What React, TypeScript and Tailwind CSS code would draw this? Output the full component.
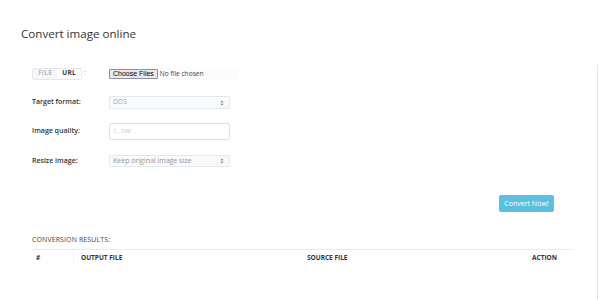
export default function App() {
  return (
    <div className="flex w-[600px] h-[299px] bg-white overflow-hidden font-['Open_Sans',sans-serif] text-[#333]">
      <main className="w-[597px] shrink-0">
        <h1 className="pl-[21px] pt-[26px] text-[11.6px] leading-[16px] font-normal text-[#333]">
          Convert image online
        </h1>

        <form className="pl-[32px] pt-[25px]">
          {/* source row */}
          <div className="flex items-center h-[13px]">
            <div className="w-[77px] flex items-center">
              <div className="flex h-[12px] border border-[#e3e8ee] rounded-[2px] text-[6.5px] font-bold leading-none">
                <span className="flex items-center px-[5px] bg-[#f4f6f9] text-[#b4bcc6] tracking-[0.3px]">FILE</span>
                <span className="flex items-center px-[5px] bg-white text-[#3a3a3a] tracking-[0.3px]">URL</span>
              </div>
              <span className="ml-[2px] text-[7px] text-[#999]">:</span>
            </div>
            <div className="flex items-center w-[129px] h-[13px] bg-[#fcfcfc]">
              <button
                type="button"
                className="h-[10px] px-[3px] bg-[#e9e9ed] border border-[#8f8f9d] rounded-[1px] text-[7px] leading-none text-black font-['Liberation_Sans',sans-serif]"
              >
                Choose Files
              </button>
              <span className="ml-[2px] text-[6.6px] text-[#444]">No file chosen</span>
            </div>
          </div>

          {/* target format */}
          <div className="flex items-center mt-[16px] h-[13px]">
            <label className="w-[77px] text-[7px] font-semibold text-[#333]">Target format:</label>
            <div className="flex items-center justify-between w-[121px] h-[13px] pl-[3px] pr-[5px] border border-[#e4e8ee] rounded-[2px] bg-[#f9fafc] text-[7px] text-[#a4acb6]">
              <span>DDS</span>
              <Arrows />
            </div>
          </div>

          {/* quality */}
          <div className="flex items-center mt-[14px] h-[17px]">
            <label className="w-[77px] text-[7px] font-semibold text-[#333]">Image quality:</label>
            <div className="flex items-center w-[121px] h-[17px] px-[3px] border border-[#dde2e8] rounded-[2px] bg-white text-[6px] italic text-[#b7bec7]">
              1...100
            </div>
          </div>

          {/* resize */}
          <div className="flex items-center mt-[15px] h-[12px]">
            <label className="w-[77px] text-[7px] font-semibold text-[#333]">Resize image:</label>
            <div className="flex items-center justify-between w-[121px] h-[12px] pl-[3px] pr-[5px] border border-[#e4e8ee] rounded-[2px] bg-[#f9fafc] text-[7px] text-[#8e969f]">
              <span>Keep original image size</span>
              <Arrows />
            </div>
          </div>

          <div className="flex justify-end pr-[43px] mt-[28px]">
            <button
              type="button"
              className="w-[55px] h-[17px] rounded-[2px] bg-[#5bc0de] text-white text-[7px] leading-none"
            >
              Convert Now!
            </button>
          </div>
        </form>

        <section className="pl-[32px] pr-[24px] mt-[23px]">
          <div className="text-[7px] text-[#444] leading-[10px] tracking-[0.1px]">CONVERSION RESULTS:</div>
          <div className="mt-[4px] border-t border-[#e8eaed] flex h-[16px] items-center text-[6.5px] font-bold text-[#333]">
            <div className="w-[42px] h-full flex items-center pl-[4px] border-r border-[#f2f3f5]">#</div>
            <div className="w-[233px] pl-[7px]">OUTPUT FILE</div>
            <div className="flex-1">SOURCE FILE</div>
            <div className="w-[41px]">ACTION</div>
          </div>
        </section>
      </main>
      <aside className="flex-1 mt-[65px] border-l border-[#e6e6e6]" />
    </div>
  );
}

function Arrows() {
  return (
    <svg width="4" height="6" viewBox="0 0 4 6" className="text-[#666]">
      <path d="M0.5 2.3 L2 0.8 L3.5 2.3 Z" fill="currentColor" />
      <path d="M0.5 3.7 L2 5.2 L3.5 3.7 Z" fill="currentColor" />
    </svg>
  );
}
